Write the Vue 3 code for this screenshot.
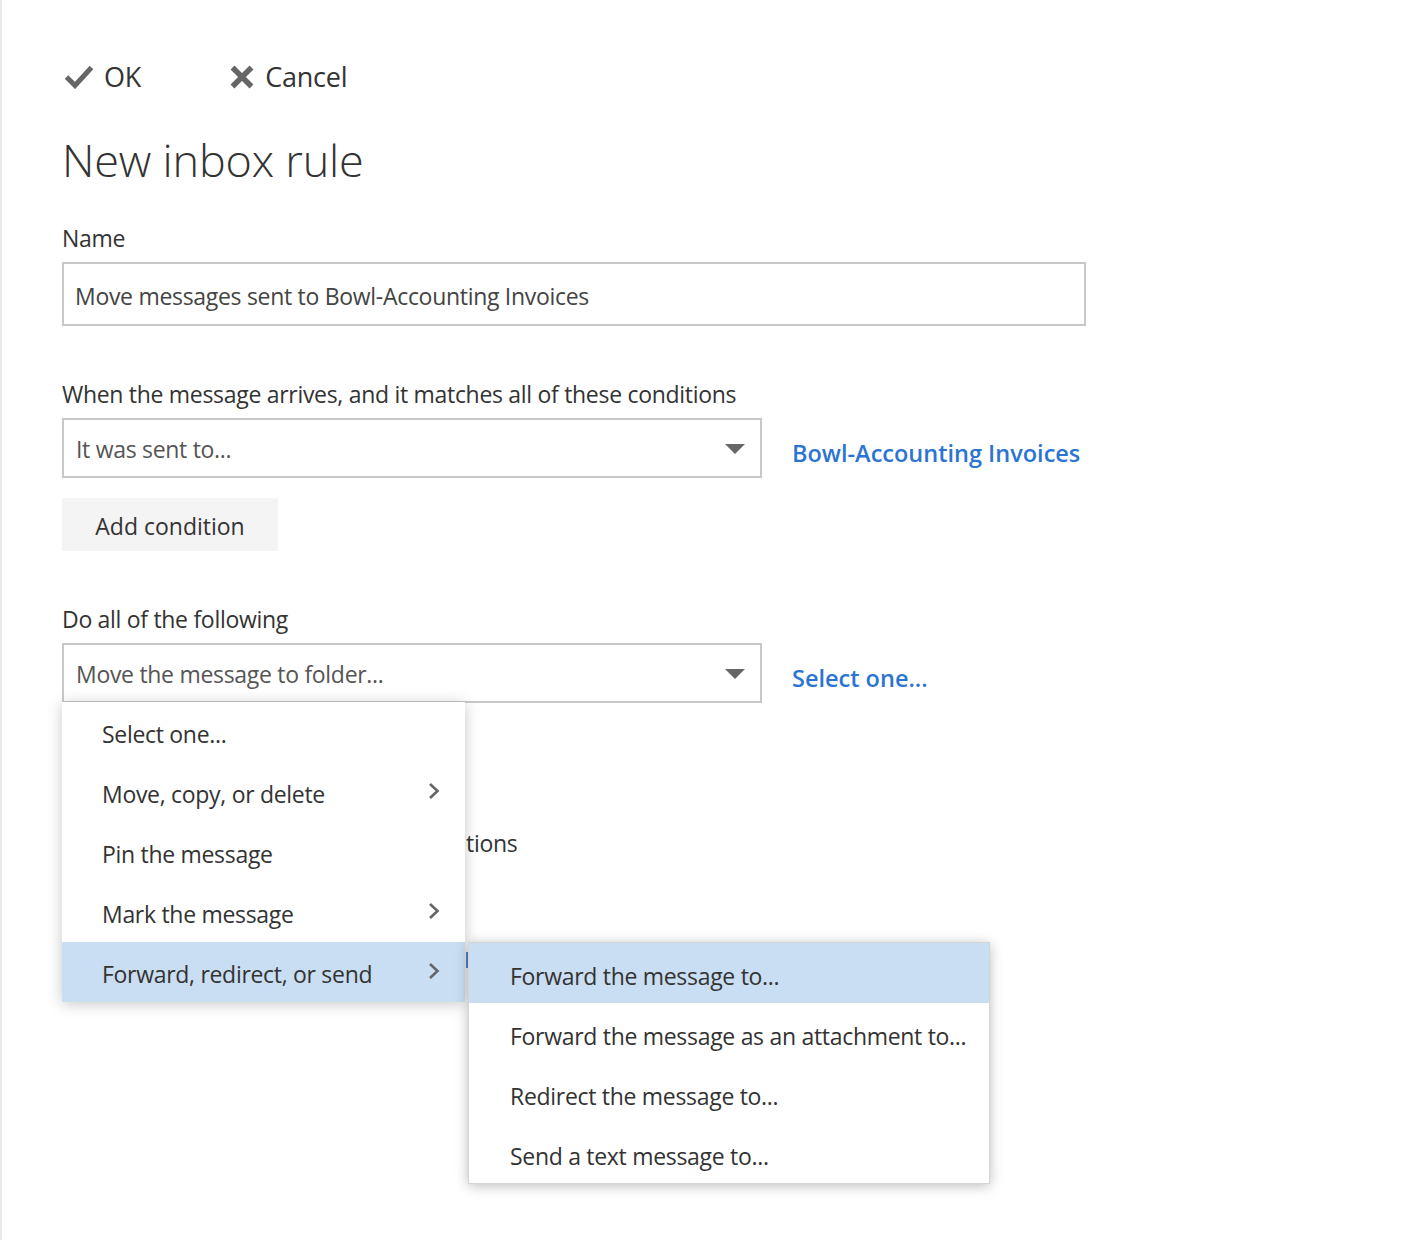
<template>
  <div class="page">
    <div class="toolbar">
      <button class="tool ok">
        <svg width="30" height="24" viewBox="0 0 30 24"><path d="M2.500 12l8.500 8.500L27.500 2.500" fill="none" stroke="#666" stroke-width="5" /></svg>
        <span>OK</span>
      </button>
      <button class="tool">
        <svg width="26" height="24" viewBox="0 0 26 24"><path d="M3.500 2.500l19 19M22.500 2.500l-19 19" fill="none" stroke="#666" stroke-width="5.500" /></svg>
        <span>Cancel</span>
      </button>
    </div>

    <h1>New inbox rule</h1>

    <div class="label name-label">Name</div>
    <div class="name-input">{{ ruleName }}</div>

    <div class="label cond-label">When the message arrives, and it matches all of these conditions</div>
    <div class="select-row">
      <div class="select">
        <span>It was sent to...</span>
        <i class="caret"></i>
      </div>
      <a class="link">Bowl-Accounting Invoices</a>
    </div>
    <button class="add-btn">Add condition</button>

    <div class="label do-label">Do all of the following</div>
    <div class="action-area">
      <div class="select-row">
        <div class="select">
          <span>Move the message to folder...</span>
          <i class="caret"></i>
        </div>
        <a class="link">Select one...</a>
      </div>

      <!-- rest of the form is covered by the menus, only these bits stick out -->
      <div class="label peek-label">tions</div>
      <div class="peek-mark"></div>

      <ul class="menu">
        <li v-for="item in mainItems" :key="item.text" :class="{ active: item.active }">
          <span>{{ item.text }}</span>
          <svg v-if="item.more" width="14" height="20" viewBox="0 0 14 20"><path d="M2 3l7.500 7-7.500 7" fill="none" stroke="#666" stroke-width="2.600" /></svg>
        </li>
      </ul>

      <ul class="submenu">
        <li v-for="(item, i) in subItems" :key="item" :class="{ active: i === 0 }">{{ item }}</li>
      </ul>
    </div>
  </div>
</template>

<script setup>
const ruleName = 'Move messages sent to Bowl-Accounting Invoices'

const mainItems = [
  { text: 'Select one...' },
  { text: 'Move, copy, or delete', more: true },
  { text: 'Pin the message' },
  { text: 'Mark the message', more: true },
  { text: 'Forward, redirect, or send', more: true, active: true }
]

const subItems = [
  'Forward the message to...',
  'Forward the message as an attachment to...',
  'Redirect the message to...',
  'Send a text message to...'
]
</script>

<style>
html,
body {
  margin: 0;
  background: #fff;
}
</style>

<style scoped>
.page {
  box-sizing: border-box;
  width: 1416px;
  height: 1240px;
  overflow: hidden;
  padding: 56px 0 0 60px;
  border-left: 2px solid #e9e9e9;
  font-family: "Open Sans", "Noto Sans", sans-serif;
  font-size: 23px;
  line-height: 32px;
  letter-spacing: -0.3px;
  color: #333;
  background: #fff;
}

.toolbar {
  display: flex;
  gap: 88px;
  height: 42px;
}

.tool {
  display: flex;
  align-items: center;
  gap: 10px;
  padding: 0;
  border: 0;
  background: none;
  font: inherit;
  font-size: 27px;
  letter-spacing: -0.2px;
  color: #333;
}

.ok {
  padding-left: 2px;
}

h1 {
  margin: 30px 0 0;
  font-size: 45px;
  line-height: 64px;
  font-weight: 300;
  letter-spacing: -0.2px;
  color: #333;
}

.label {
  height: 32px;
}

.name-label {
  margin-top: 30px;
}

.name-input {
  box-sizing: border-box;
  width: 1024px;
  height: 64px;
  margin-top: 8px;
  padding: 16px 11px;
  border: 2px solid #c8c8c8;
  color: #444;
}

.cond-label {
  margin-top: 52px;
}

.select-row {
  display: flex;
  align-items: center;
  gap: 30px;
}

.cond-label + .select-row {
  margin-top: 8px;
}

.select {
  box-sizing: border-box;
  display: flex;
  align-items: center;
  justify-content: space-between;
  width: 700px;
  height: 60px;
  padding: 2px 15px 0 12px;
  border: 2px solid #c8c8c8;
  color: #555;
}

.caret {
  width: 0;
  height: 0;
  border-left: 10px solid transparent;
  border-right: 10px solid transparent;
  border-top: 10px solid #666;
}

.link {
  padding-top: 10px;
  font-size: 23.500px;
  font-weight: 600;
  letter-spacing: 0;
  color: #2b74d2;
}

.add-btn {
  display: block;
  width: 216px;
  height: 53px;
  margin-top: 20px;
  padding: 3px 0 0;
  border: 0;
  background: #f4f4f4;
  font: inherit;
  color: #333;
}

.do-label {
  margin-top: 52px;
}

.action-area {
  position: relative;
  margin-top: 8px;
}

.peek-label {
  margin-top: 124px;
  padding-left: 404px;
}

.peek-mark {
  width: 2px;
  height: 16px;
  margin: 93px 0 0 404px;
  background: #5a8ad0;
}

ul {
  position: absolute;
  margin: 0;
  padding: 0;
  list-style: none;
  background: #fff;
}

.menu {
  top: 59px;
  left: 0;
  width: 403px;
  box-shadow: 0 2px 14px rgba(0, 0, 0, 0.22);
}

.menu li {
  box-sizing: border-box;
  display: flex;
  align-items: center;
  justify-content: space-between;
  height: 60px;
  padding: 3px 23px 0 40px;
}

.menu li svg {
  margin-top: -5px;
}

.submenu {
  top: 299px;
  left: 406px;
  width: 520px;
  border: 1px solid #d4d4d4;
  box-shadow: 0 2px 12px rgba(0, 0, 0, 0.26);
}

.submenu li {
  box-sizing: border-box;
  height: 60px;
  padding: 17px 10px 0 41px;
  white-space: nowrap;
}

.active {
  background: #c9def2;
}
</style>
